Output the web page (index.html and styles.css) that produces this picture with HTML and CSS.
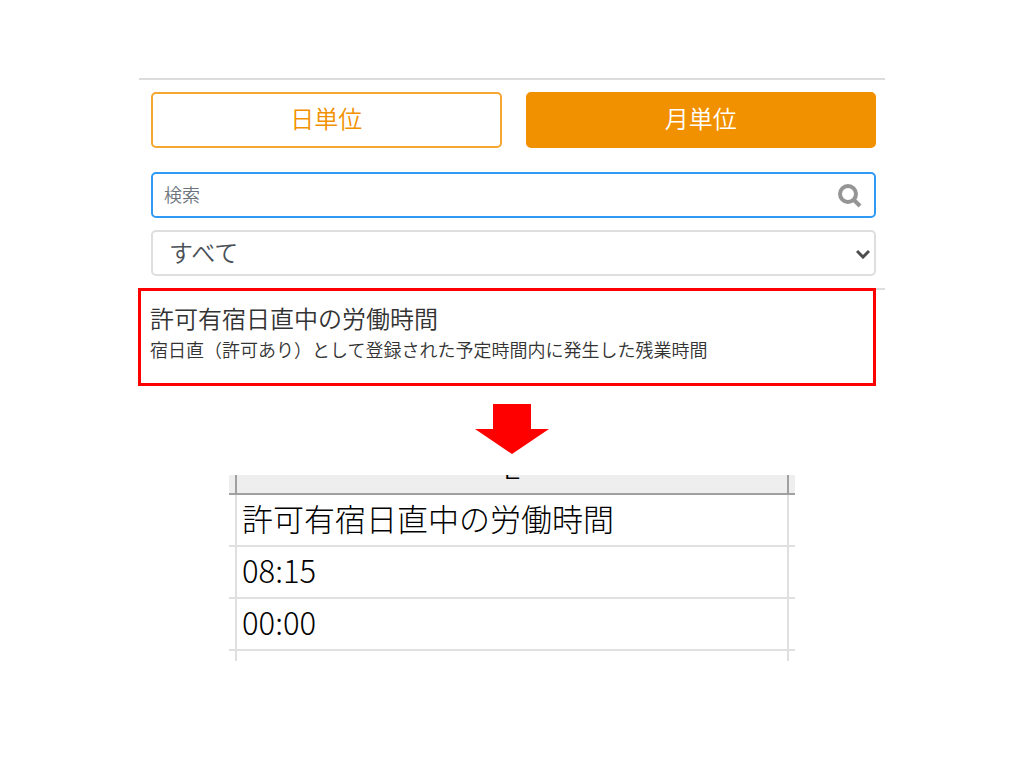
FILE: index.html
```html
<!DOCTYPE html>
<html lang="ja">
<head>
    <meta charset="UTF-8">
    <meta name="viewport" content="width=device-width, initial-scale=1">
    <title>月単位</title>
    <link rel="stylesheet" href="styles.css">
</head>
<body>

    <main class="page">
        <section class="panel">
            <div class="filters">
                <div class="units">
                    <button type="button" class="unit">日単位</button>
                    <button type="button" class="unit active">月単位</button>
                </div>

                <div class="field">
                    <input type="text" class="search" placeholder="検索" aria-label="検索">
                    <svg class="icon-search" viewBox="0 0 24 24" aria-hidden="true">
                        <circle cx="10" cy="10" r="8" fill="none" stroke="#959595" stroke-width="4"/>
                        <path d="M15.5 15.5L22 22" stroke="#959595" stroke-width="4"/>
                    </svg>
                </div>

                <div class="field">
                    <select class="category" aria-label="種別">
                        <option>すべて</option>
                    </select>
                    <svg class="icon-arrow" viewBox="0 0 14 10" aria-hidden="true">
                        <path d="M1 2L7 8L13 2" fill="none" stroke="#4d4d4d" stroke-width="3"/>
                    </svg>
                </div>
            </div>

            <div class="results">
                <div class="item">
                    <h2>許可有宿日直中の労働時間</h2>
                    <p>宿日直（許可あり）として登録された予定時間内に発生した残業時間</p>
                </div>
            </div>
        </section>

        <svg class="down" viewBox="0 0 74 50" aria-hidden="true">
            <path d="M18 0H56V25H74L37 50L0 25H18Z" fill="#ff0000"/>
        </svg>

        <!-- 出力シート -->
        <table class="sheet">
            <thead>
                <tr>
                    <th class="edge"></th>
                    <th><div class="letter">E</div></th>
                    <th class="edge"></th>
                </tr>
            </thead>
            <tbody>
                <tr><td></td><td>許可有宿日直中の労働時間</td><td></td></tr>
                <tr><td></td><td>08:15</td><td></td></tr>
                <tr><td></td><td>00:00</td><td></td></tr>
                <tr class="last"><td></td><td></td><td></td></tr>
            </tbody>
        </table>
    </main>

</body>
</html>
```

FILE: styles.css
```css
* {
    box-sizing: border-box;
}
body {
    margin: 0;
    background: #fff;
    color: #333;
    font-family: "Noto Sans CJK JP", sans-serif;
    font-weight: 350;
}
.page {
    display: flex;
    flex-direction: column;
    align-items: center;
    padding: 78px 16px 40px;
}
.panel {
    width: 100%;
    max-width: 746px;
    border-top: 2px solid #dcdcdc;
}
.filters {
    display: flex;
    flex-direction: column;
    gap: 12px;
    padding: 12px 9px 12px 12px;
}
.units {
    display: grid;
    grid-template-columns: 1fr 1fr;
    gap: 24px;
    margin-bottom: 12px;
}
.unit {
    height: 56px;
    padding: 0 0 5px;
    border: 2px solid #f5a532;
    border-radius: 5px;
    background: #fff;
    color: #f29100;
    font: inherit;
    font-size: 24px;
    line-height: 32px;
    cursor: pointer;
}
.unit.active {
    border-color: #f29100;
    background: #f29100;
    color: #fff;
}
.field {
    position: relative;
}
.search,
.category {
    display: block;
    width: 100%;
    height: 46px;
    border-radius: 5px;
    background: #fff;
    font: inherit;
    outline: none;
}
.search {
    padding: 0 56px 2px 11px;
    border: 2px solid #2f9af3;
    font-size: 18px;
}
.search::placeholder {
    color: #6c757d;
    opacity: 1;
}
.category {
    appearance: none;
    padding: 0 32px 4px 16px;
    border: 2px solid #dedede;
    color: #495057;
    font-size: 24px;
}
.icon-search {
    position: absolute;
    top: 12px;
    right: 14px;
    width: 24px;
    height: 24px;
}
.icon-arrow {
    position: absolute;
    top: 19px;
    right: 6px;
    width: 14px;
    height: 10px;
    pointer-events: none;
}
.results {
    border-top: 2px solid #dedede;
}
.item {
    margin: -2px 9px 0 -1px;
    padding: 11px 8px 19px 9px;
    border: 3px solid #ff0000;
}
.item h2 {
    margin: 0;
    font-size: 24px;
    font-weight: inherit;
    line-height: 32px;
}
.item p {
    margin: 0;
    font-size: 18px;
    line-height: 30px;
    white-space: nowrap;
}
.down {
    width: 74px;
    height: 50px;
    margin: 18px 0 21px;
}
.sheet {
    width: 100%;
    max-width: 566px;
    table-layout: fixed;
    border-collapse: collapse;
    color: #000;
    font-size: 31px;
    font-weight: 300;
    line-height: 44px;
}
.sheet th,
.sheet td {
    padding: 0;
    border: 2px solid #e0e0e0;
    font-weight: inherit;
    text-align: left;
}
.sheet td {
    height: 52px;
    padding: 0 0 5px 5px;
}
.sheet tr > :first-child {
    padding: 0;
    border-left: none;
}
.sheet tr > :last-child {
    padding: 0;
    border-right: none;
}
.sheet th {
    border-color: #a0a0a0;
    border-top: none;
    background: #eee;
}
.sheet .edge {
    width: 7px;
}
.letter {
    display: flex;
    align-items: flex-end;
    justify-content: center;
    height: 18px;
    overflow: hidden;
    line-height: 54px;
}
.sheet .last td {
    height: 11px;
    padding: 0;
    border-bottom: none;
}
```
